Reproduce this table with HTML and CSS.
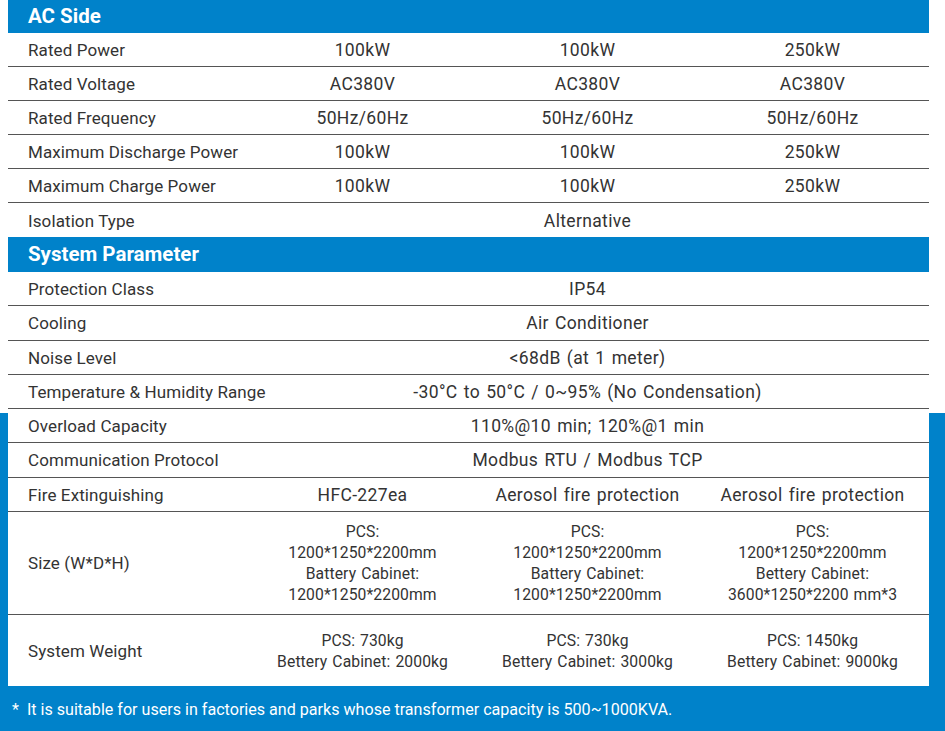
FILE: index.html
```html
<!DOCTYPE html>
<html>
<head>
<meta charset="utf-8">
<link rel="stylesheet" href="styles.css">
</head>
<body>
<div class="sheet">
  <div class="head">AC Side</div>
  <div class="sec sec-ac">
    <div class="row"><div class="lbl">Rated Power</div><div class="v">100kW</div><div class="v">100kW</div><div class="v">250kW</div></div>
    <div class="row"><div class="lbl">Rated Voltage</div><div class="v">AC380V</div><div class="v">AC380V</div><div class="v">AC380V</div></div>
    <div class="row"><div class="lbl">Rated Frequency</div><div class="v">50Hz/60Hz</div><div class="v">50Hz/60Hz</div><div class="v">50Hz/60Hz</div></div>
    <div class="row"><div class="lbl">Maximum Discharge Power</div><div class="v">100kW</div><div class="v">100kW</div><div class="v">250kW</div></div>
    <div class="row"><div class="lbl">Maximum Charge Power</div><div class="v">100kW</div><div class="v">100kW</div><div class="v">250kW</div></div>
    <div class="row last"><div class="lbl">Isolation Type</div><div class="v span">Alternative</div></div>
  </div>
  <div class="head head2">System Parameter</div>
  <div class="sec sec-sys">
    <div class="row"><div class="lbl">Protection Class</div><div class="v span">IP54</div></div>
    <div class="row"><div class="lbl">Cooling</div><div class="v span">Air Conditioner</div></div>
    <div class="row"><div class="lbl">Noise Level</div><div class="v span">&lt;68dB (at 1 meter)</div></div>
    <div class="row"><div class="lbl">Temperature &amp; Humidity Range</div><div class="v span">-30°C to 50°C / 0~95% (No Condensation)</div></div>
    <div class="row"><div class="lbl">Overload Capacity</div><div class="v span">110%@10 min; 120%@1 min</div></div>
    <div class="row"><div class="lbl">Communication Protocol</div><div class="v span">Modbus RTU / Modbus TCP</div></div>
    <div class="row"><div class="lbl">Fire Extinguishing</div><div class="v">HFC-227ea</div><div class="v">Aerosol fire protection</div><div class="v">Aerosol fire protection</div></div>
    <div class="row tall size"><div class="lbl">Size (W*D*H)</div>
      <div class="v multi">PCS:<br>1200*1250*2200mm<br>Battery Cabinet:<br>1200*1250*2200mm</div>
      <div class="v multi">PCS:<br>1200*1250*2200mm<br>Battery Cabinet:<br>1200*1250*2200mm</div>
      <div class="v multi">PCS:<br>1200*1250*2200mm<br>Bettery Cabinet:<br>3600*1250*2200 mm*3</div>
    </div>
    <div class="row tall weight last"><div class="lbl">System Weight</div>
      <div class="v multi">PCS: 730kg<br>Bettery Cabinet: 2000kg</div>
      <div class="v multi">PCS: 730kg<br>Bettery Cabinet: 3000kg</div>
      <div class="v multi">PCS: 1450kg<br>Bettery Cabinet: 9000kg</div>
    </div>
  </div>
</div>
<div class="note">*&nbsp; It is suitable for users in factories and parks whose transformer capacity is 500~1000KVA.</div>
</body>
</html>
```
FILE: styles.css
```css
html, body {
  margin: 0;
  padding: 0;
}
body {
  width: 945px;
  height: 731px;
  overflow: hidden;
  background: linear-gradient(to bottom, #ffffff 0, #ffffff 413px, #0082ca 413px, #0082ca 100%);
  font-family: Roboto, "Liberation Sans", sans-serif;
  color: #333333;
}
.sheet {
  margin-left: 8px;
  width: 921px;
  background: #ffffff;
}
.head {
  background: #0082ca;
  color: #ffffff;
  font-weight: 700;
  font-size: 20.5px;
  height: 33px;
  line-height: 33px;
  padding-left: 20px;
  box-sizing: border-box;
}
.head2 {
  height: 35px;
  line-height: 35px;
}
.row {
  display: grid;
  grid-template-columns: 242px 225px 225px 225px;
  align-items: center;
  box-sizing: border-box;
  height: 34px;
  padding-top: 1px;
  border-bottom: 1px solid #555555;
  font-size: 17px;
}
.sec-sys .row {
  height: 34.25px;
}
.row.last {
  border-bottom: none;
}
.lbl {
  padding-left: 20px;
  white-space: nowrap;
  letter-spacing: 0.1px;
}
.v {
  text-align: center;
  white-space: nowrap;
  font-size: 17.5px;
  letter-spacing: 0.35px;
  word-spacing: 1.5px;
}
.v.span {
  grid-column: 2 / span 3;
}
.sec-sys .row.size {
  height: 103px;
}
.sec-sys .row.weight {
  height: 71px;
}
.v.multi {
  font-size: 15.7px;
  line-height: 21px;
  letter-spacing: 0.1px;
  word-spacing: 1px;
}
.note {
  height: 45px;
  line-height: 48px;
  color: #ffffff;
  font-size: 16.1px;
  padding-left: 12px;
  box-sizing: border-box;
}
```
